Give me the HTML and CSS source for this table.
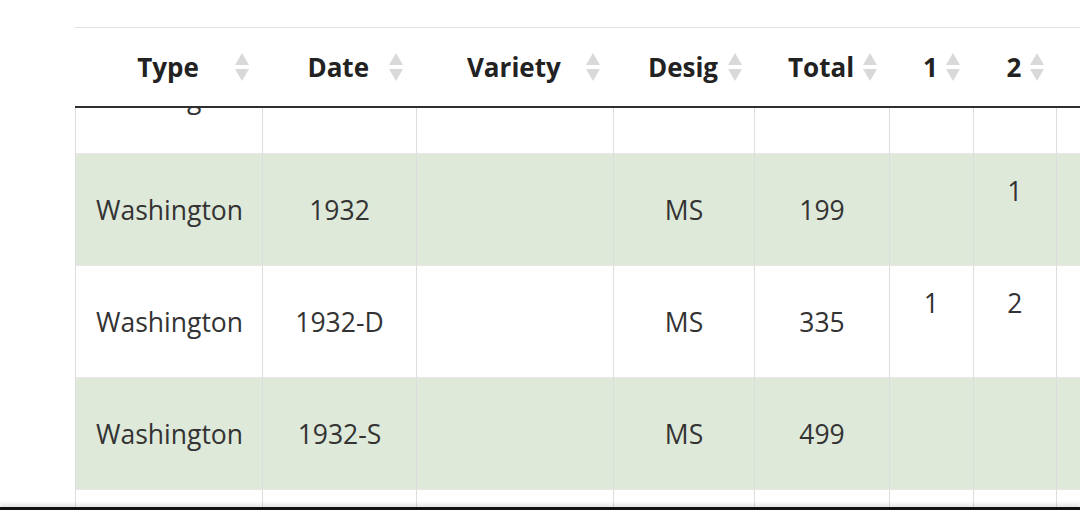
FILE: index.html
```html
<!DOCTYPE html>
<html lang="en">
<head>
<meta charset="utf-8">
<title>Washington quarters</title>
<link rel="stylesheet" href="styles.css">
</head>
<body>
<div class="page">
  <div class="table-wrap">
    <table class="grid head-table">
      <colgroup>
        <col class="c-type"><col class="c-date"><col class="c-variety"><col class="c-desig"><col class="c-total"><col class="c-n"><col class="c-n"><col class="c-n"><col class="c-n">
      </colgroup>
      <thead>
        <tr>
          <th><span class="label">Type</span><span class="sort"></span></th>
          <th><span class="label">Date</span><span class="sort"></span></th>
          <th><span class="label">Variety</span><span class="sort"></span></th>
          <th><span class="label">Desig</span><span class="sort"></span></th>
          <th><span class="label">Total</span><span class="sort"></span></th>
          <th><span class="label">1</span><span class="sort"></span></th>
          <th><span class="label">2</span><span class="sort"></span></th>
          <th><span class="label">3</span><span class="sort"></span></th>
          <th><span class="label">4</span><span class="sort"></span></th>
        </tr>
      </thead>
    </table>
    <table class="grid body-table">
      <colgroup>
        <col class="c-type"><col class="c-date"><col class="c-variety"><col class="c-desig"><col class="c-total"><col class="c-n"><col class="c-n"><col class="c-n"><col class="c-n">
      </colgroup>
      <tbody>
        <tr>
          <td class="left">Washington</td><td></td><td></td><td></td><td></td><td></td><td></td><td></td><td></td>
        </tr>
        <tr>
          <td class="left">Washington</td><td>1932</td><td></td><td>MS</td><td>199</td><td></td><td><span class="raised">1</span></td><td></td><td></td>
        </tr>
        <tr>
          <td class="left">Washington</td><td>1932-D</td><td></td><td>MS</td><td>335</td><td><span class="raised">1</span></td><td><span class="raised">2</span></td><td></td><td></td>
        </tr>
        <tr>
          <td class="left">Washington</td><td>1932-S</td><td></td><td>MS</td><td>499</td><td></td><td></td><td></td><td></td>
        </tr>
        <tr>
          <td class="left">Washington</td><td>1934</td><td></td><td>MS</td><td>120</td><td></td><td></td><td></td><td></td>
        </tr>
      </tbody>
    </table>
  </div>
</div>
</body>
</html>
```

FILE: styles.css
```css
html, body {
  margin: 0;
  padding: 0;
  background: #ffffff;
}

.page {
  position: relative;
  width: 1080px;
  height: 510px;
  overflow: hidden;
  padding: 27px 0 0 75px;
  box-sizing: border-box;
  font-family: "Open Sans", "Noto Sans", sans-serif;
  color: #333333;
}

.page::after {
  content: "";
  position: absolute;
  left: 0;
  right: 0;
  bottom: 0;
  height: 3px;
  background: #111111;
  box-shadow: 0 -2px 4px rgba(0, 0, 0, 0.18);
}

.table-wrap {
  position: relative;
  width: 1148px;
  padding-top: 14px;
}

.grid {
  table-layout: fixed;
  border-collapse: separate;
  border-spacing: 0;
  width: 1148px;
}

.c-type { width: 186px; }
.c-date { width: 154px; }
.c-variety { width: 197px; }
.c-desig { width: 141px; }
.c-total { width: 135px; }
.c-n { width: 83.5px; }

/* fixed header clone lying over the scrolled body */
.head-table {
  position: absolute;
  top: 0;
  left: 0;
  z-index: 2;
  background: #ffffff;
  border-top: 1px solid #e2e2e2;
  border-bottom: 2px solid #2f2f2f;
}

.head-table th {
  position: relative;
  height: 78px;
  padding: 0;
  font-size: 26px;
  font-weight: 700;
  color: #222222;
  text-align: center;
  vertical-align: middle;
  line-height: 30px;
}

.sort {
  position: absolute;
  right: 12px;
  top: 25px;
  width: 14px;
  height: 28px;
}

.sort::before,
.sort::after {
  content: "";
  position: absolute;
  left: 0;
  border-left: 7px solid transparent;
  border-right: 7px solid transparent;
}

.sort::before {
  top: 0;
  border-bottom: 12px solid #d9d9d9;
}

.sort::after {
  bottom: 0;
  border-top: 12px solid #d9d9d9;
}

.body-table {
  border-left: 1px solid #dddddd;
}

.body-table td {
  box-sizing: border-box;
  height: 112px;
  padding: 0 10px;
  font-size: 26.5px;
  line-height: 40px;
  text-align: center;
  vertical-align: middle;
  border-left: 1px solid #dddddd;
  border-top: 1px solid #e8e8e8;
  white-space: nowrap;
}

.body-table td:first-child {
  border-left: none;
}

.body-table td.left {
  text-align: left;
  padding-left: 20px;
}

.body-table tr:nth-child(even) td {
  background: #dee9da;
}

.raised {
  display: inline-block;
  vertical-align: middle;
  position: relative;
  top: -20px;
}
```
